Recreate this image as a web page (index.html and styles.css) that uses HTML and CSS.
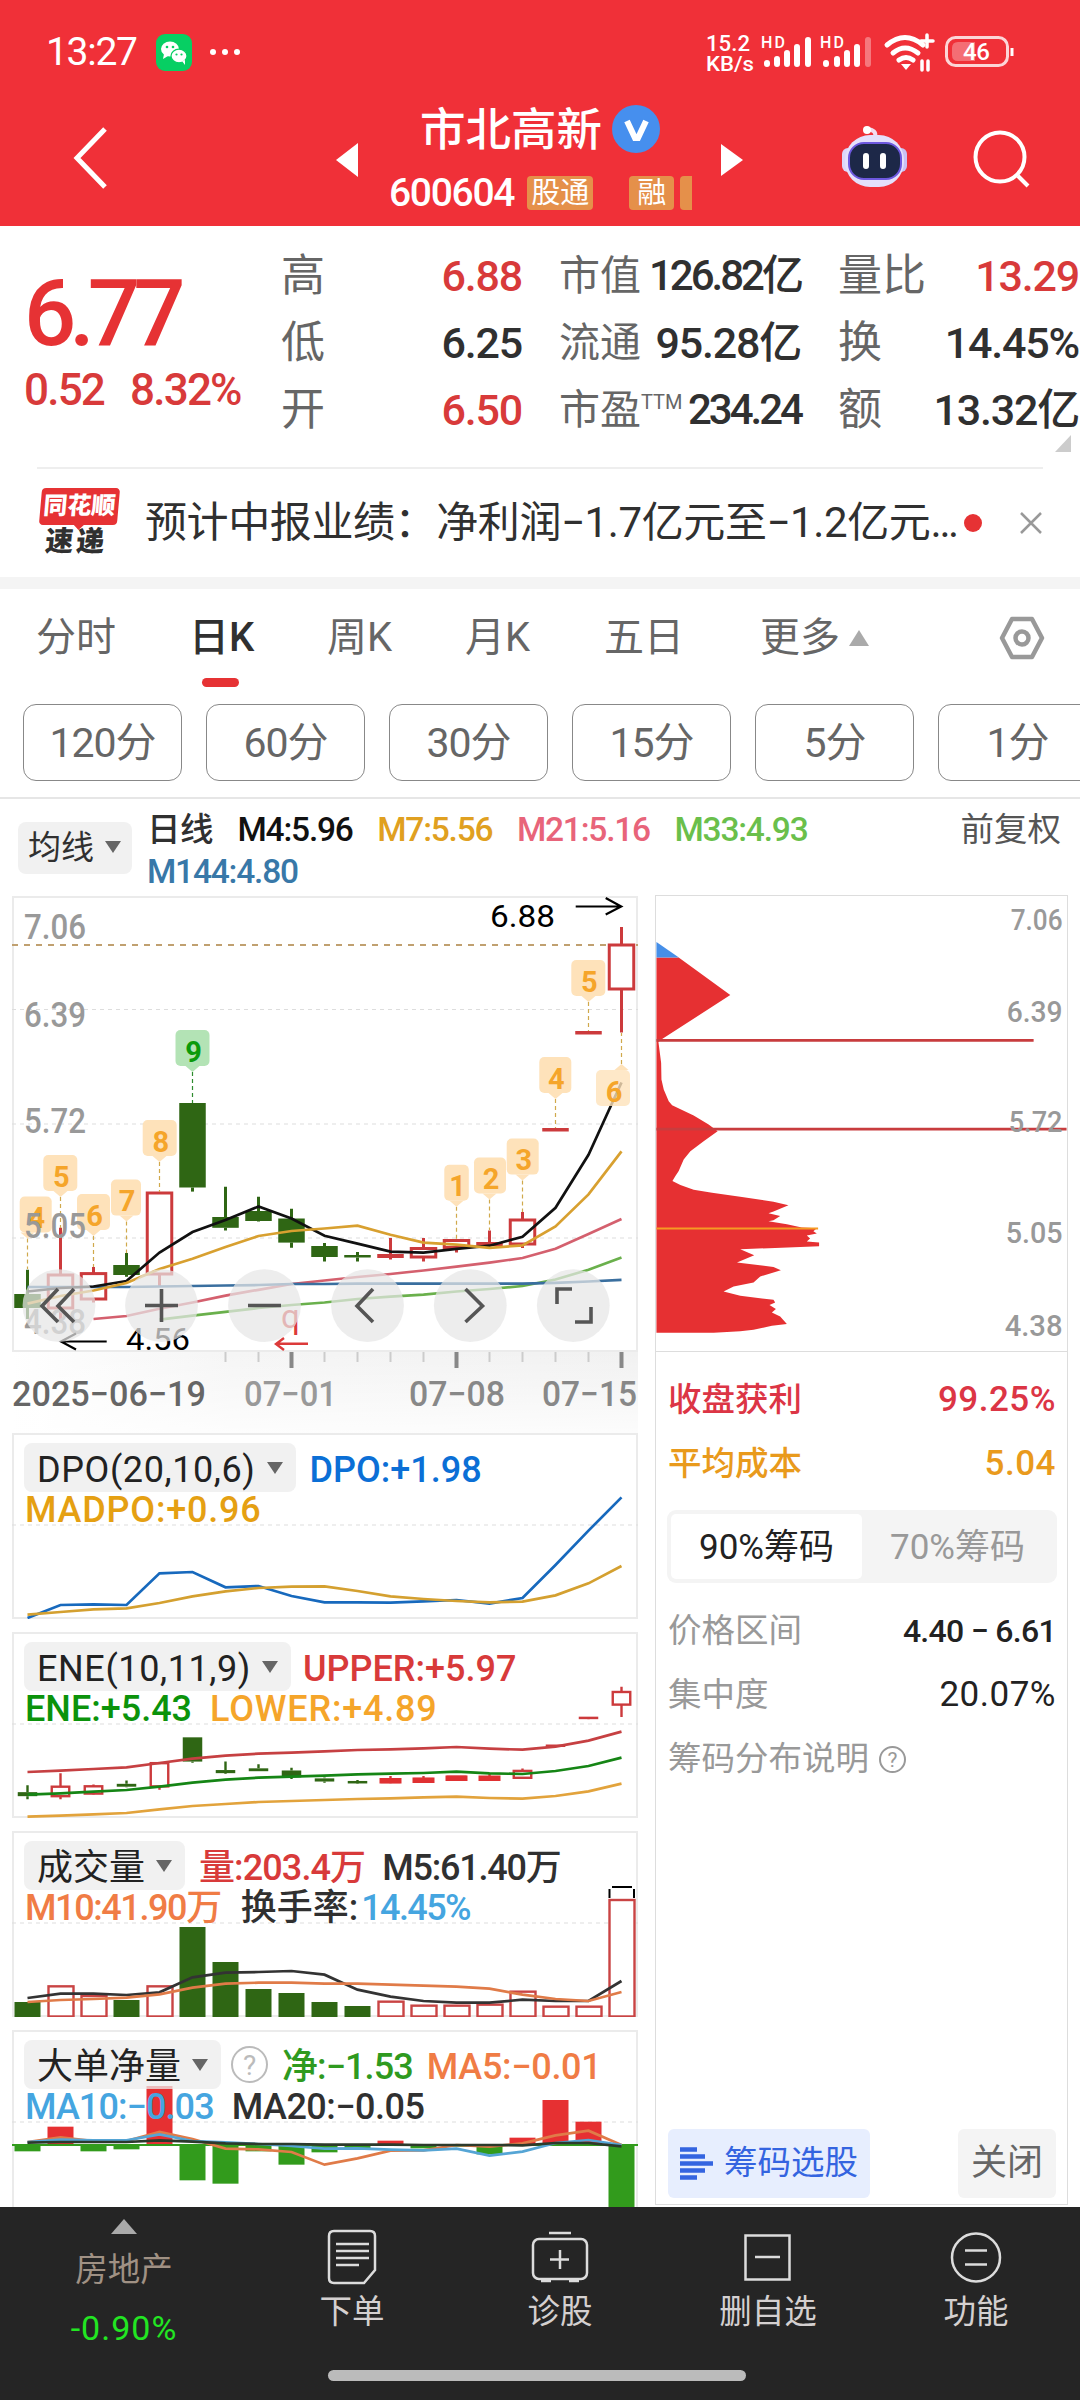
FILE: index.html
```
<!DOCTYPE html>
<html lang="zh-CN">
<head>
<meta charset="utf-8">
<meta name="viewport" content="width=device-width">
<title>市北高新 600604</title>
<link rel="stylesheet" href="styles.css">
</head>
<body>
<div class="page">

<header class="top">
	<div class="status">
		<span class="clock">13:27</span>
		<svg class="wechat" width="36" height="37" viewBox="0 0 36 37">
			<rect width="36" height="37" rx="9" fill="#07cf63"/>
			<ellipse cx="14" cy="15" rx="9" ry="7.6" fill="#fff"/>
			<path d="M8 20l-1 5 5-3z" fill="#fff"/>
			<ellipse cx="23" cy="22" rx="8" ry="6.8" fill="#fff" stroke="#07cf63" stroke-width="1.2"/>
			<path d="M26 27l3 4 0-5z" fill="#fff"/>
			<g fill="#07cf63"><circle cx="11" cy="13" r="1.3"/><circle cx="17" cy="13" r="1.3"/><circle cx="20.5" cy="20.5" r="1.1"/><circle cx="25.5" cy="20.5" r="1.1"/></g>
		</svg>
		<span class="dots"><i></i><i></i><i></i></span>
		<svg class="sysicons" width="320" height="52" viewBox="700 26 320 52">
			<g fill="#fff" font-weight="500">
				<text x="706" y="51" font-size="22" textLength="44" lengthAdjust="spacingAndGlyphs">15.2</text>
				<text x="706" y="71" font-size="21" textLength="48" lengthAdjust="spacingAndGlyphs">KB/s</text>
				<text x="761" y="48" font-size="16" textLength="24">HD</text>
				<text x="820" y="48" font-size="16" textLength="24">HD</text>
			</g>
			<g stroke="#fff" stroke-width="6" stroke-linecap="round">
				<path d="M767 63v1M777 59v5M787 53v11M797 47v17M808 40v24"/>
				<path d="M826 63v1M837 59v5M847 53v11M857 47v17"/>
				<path d="M868 40v24" opacity=".35"/>
			</g>
			<g fill="none" stroke="#fff" stroke-width="5" stroke-linecap="round">
				<path d="M887 45q18-15 36 0M893 53q12-10 25 0M899 60q7-5 14 0"/>
				<path d="M927 35v12M921 41h12M922 61v9M928 61v9" stroke-width="3.5"/>
			</g>
			<path d="M901 64h10l-5 6z" fill="#fff"/>
			<rect x="946.5" y="37.500" width="61" height="28" rx="9" fill="none" stroke="#fff" stroke-opacity=".8" stroke-width="3"/>
			<path d="M958 42h17v19h-17q-6 0-6-6v-7q0-6 6-6z" fill="#fff" opacity=".3"/>
			<path d="M1012 48v8" stroke="#fff" stroke-width="3"/>
			<text x="963" y="60" font-size="24" font-weight="500" fill="#fff" textLength="27">46</text>
		</svg>
	</div>
	<div class="titlebar">
		<svg class="back" width="40" height="64" viewBox="0 0 40 64"><path d="M35 3L7 32l28 29" fill="none" stroke="#fff" stroke-width="5"/></svg>
		<svg class="prev" width="22" height="34" viewBox="0 0 22 34"><path d="M22 0v34L0 17z" fill="#fff"/></svg>
		<div class="stock">
			<div class="name"><span>市北高新</span>
				<svg width="48" height="48" viewBox="0 0 48 48"><circle cx="24" cy="24" r="24" fill="#468fee"/><path d="M15 16l8 17h3l8-17" fill="none" stroke="#fff" stroke-width="6"/></svg>
			</div>
			<div class="code">600604<span class="tag wide">股通</span><span class="tag">融</span><span class="tag cut"></span></div>
		</div>
		<svg class="next" width="22" height="32" viewBox="0 0 22 32"><path d="M0 0v32l22-16z" fill="#fff"/></svg>
		<svg class="robot" width="68" height="62" viewBox="0 0 68 62">
			<path d="M34 11q2-7-8-8" fill="none" stroke="#f3dcef" stroke-width="4"/><circle cx="26" cy="4" r="4" fill="#fff"/>
			<rect x="1" y="22" width="12" height="24" rx="6" fill="#dcd7fa"/><rect x="54" y="22" width="12" height="24" rx="6" fill="#c9c1f4"/>
			<rect x="4" y="9" width="59" height="52" rx="25" fill="#e4e0fb"/>
			<rect x="8" y="17" width="52" height="36" rx="15" fill="#1d2848" stroke="#6d58df" stroke-width="2"/>
			<path d="M25 30v10M42 30v10" stroke="#fff" stroke-width="6" stroke-linecap="round"/>
		</svg>
		<svg class="search" width="58" height="58" viewBox="0 0 58 58"><circle cx="27" cy="27" r="24.500" fill="none" stroke="#fff" stroke-width="4"/><path d="M45 46l10 10" stroke="#fff" stroke-width="4"/></svg>
	</div>
</header>

<section class="quote">
	<div class="last">
		<div class="price">6.77</div>
		<div class="change"><span>0.52</span><span>8.32%</span></div>
	</div>
	<dl class="stats">
		<div><dt>高</dt><dd class="up">6.88</dd></div>
		<div><dt>市值</dt><dd class="tight">126.82亿</dd></div>
		<div><dt>量比</dt><dd class="up">13.29</dd></div>
		<div><dt>低</dt><dd>6.25</dd></div>
		<div><dt>流通</dt><dd>95.28亿</dd></div>
		<div><dt>换</dt><dd>14.45%</dd></div>
		<div><dt>开</dt><dd class="up">6.50</dd></div>
		<div><dt>市盈<sup>TTM</sup></dt><dd class="tight">234.24</dd></div>
		<div><dt>额</dt><dd>13.32亿</dd></div>
	</dl>
	<i class="corner"></i>
</section>

<section class="news">
	<div class="newslogo"><b>同花顺</b><em>速递</em></div>
	<p>预计中报业绩：净利润−1.7亿元至−1.2亿元…</p>
	<i class="dot"></i>
	<svg width="24" height="24" viewBox="0 0 24 24"><path d="M2 2l20 20M22 2L2 22" stroke="#999" stroke-width="2.500"/></svg>
</section>

<nav class="tabs">
	<span>分时</span><span class="on">日K</span><span>周K</span><span>月K</span><span>五日</span><span class="more">更多<i></i></span>
	<svg width="46" height="44" viewBox="0 0 46 44"><path d="M13 3h20l10 19-10 19H13L3 22z" fill="none" stroke="#999" stroke-width="4.500" stroke-linejoin="round"/><circle cx="23" cy="22" r="6.500" fill="none" stroke="#999" stroke-width="4.500"/></svg>
</nav>
<div class="mins"><span>120分</span><span>60分</span><span>30分</span><span>15分</span><span>5分</span><span>1分</span></div>

<div class="malegend">
	<span class="drop">均线<i></i></span>
	<div class="mas">
		<div><b>日线</b><span class="k">M4:5.96</span><span class="y">M7:5.56</span><span class="p">M21:5.16</span><span class="g">M33:4.93</span></div>
		<div><span class="b">M144:4.80</span></div>
	</div>
	<span class="adj">前复权</span>
</div>

<main class="charts">
	<div class="left">
		<svg id="kline" width="626" height="537" viewBox="13 896 626 537">
			<defs><linearGradient id="fade"><stop offset="0" stop-color="#fff"/><stop offset=".35" stop-color="#f5f5f5"/><stop offset="1" stop-color="#f1f1f1"/></linearGradient>
			<linearGradient id="fadeDown" x2="0" y2="1"><stop offset="0" stop-color="#fff" stop-opacity="0"/><stop offset="1" stop-color="#fff" stop-opacity=".8"/></linearGradient></defs>
		</svg>
		<section class="panel">
			<svg id="dpo" viewBox="13 0 626 186"></svg>
			<div class="legend latin"><span class="drop">DPO(20,10,6)<i></i></span><span class="dpo">DPO:+1.98</span></div>
			<div class="legend latin"><span class="amber">MADPO:+0.96</span></div>
		</section>
		<section class="panel">
			<svg id="ene" viewBox="13 0 626 186"></svg>
			<div class="legend latin"><span class="drop">ENE(10,11,9)<i></i></span><span class="red">UPPER:+5.97</span></div>
			<div class="legend latin"><span class="green">ENE:+5.43</span><span class="orange">LOWER:+4.89</span></div>
		</section>
		<section class="panel">
			<svg id="vol" viewBox="13 0 626 186"></svg>
			<div class="legend"><span class="drop">成交量<i></i></span><span class="red">量:203.4万</span><span class="dark m5">M5:61.40万</span></div>
			<div class="legend"><span class="coral m10">M10:41.90万</span><span class="dark turn">换手率:</span><span class="sky rate">14.45%</span></div>
		</section>
		<section class="panel">
			<svg id="net" viewBox="13 0 626 186"></svg>
			<div class="legend"><span class="drop">大单净量<i></i></span><span class="help">?</span><span class="leaf">净:−1.53</span><span class="coral ma5">MA5:−0.01</span></div>
			<div class="legend"><span class="sky">MA10:−0.03</span><span class="dark ma20">MA20:−0.05</span></div>
		</section>
	</div>

	<aside class="chips">
		<svg id="chips" width="411" height="456" viewBox="656 896 411 456"></svg>
		<div class="row profit"><span>收盘获利</span><b>99.25%</b></div>
		<div class="row cost"><span>平均成本</span><b>5.04</b></div>
		<div class="seg"><span class="on">90%筹码</span><span>70%筹码</span></div>
		<div class="row"><span>价格区间</span><b class="range">4.40 − 6.61</b></div>
		<div class="row"><span>集中度</span><b>20.07%</b></div>
		<div class="row"><span>筹码分布说明</span><i class="help small">?</i></div>
		<div class="actions">
			<span class="pick"><svg width="33" height="34" viewBox="0 0 33 34"><path d="M0 2.500h17M0 9.500h25M0 16.500h33M0 23.500h25M0 30.500h17" stroke="#3464e0" stroke-width="4.500"/></svg>筹码选股</span>
			<span class="close">关闭</span>
		</div>
	</aside>
</main>

<footer class="bottom">
	<div class="sector"><i></i><span>房地产</span><b>-0.90%</b></div>
	<div class="item">
		<svg width="56" height="58" viewBox="0 0 56 58"><path d="M10 3h36q5 0 5 5v34L40 55H10q-5 0-5-5V8q0-5 5-5z"/><path d="M12 16h33M12 23h33M12 30h33M12 37h23"/></svg>
		<span>下单</span>
	</div>
	<div class="item">
		<svg width="58" height="58" viewBox="0 0 58 58"><rect x="2" y="11" width="54" height="40" rx="6"/><path d="M18 5h22M29 22v19M19 31.500h19M10 53h10M38 53h10"/></svg>
		<span>诊股</span>
	</div>
	<div class="item">
		<svg width="58" height="58" viewBox="0 0 58 58"><rect x="6.500" y="7.500" width="44" height="44"/><path d="M16 29h25"/></svg>
		<span>删自选</span>
	</div>
	<div class="item">
		<svg width="58" height="58" viewBox="0 0 58 58"><circle cx="29" cy="29.500" r="24"/><path d="M18 22.500h22M18 36.500h22"/></svg>
		<span>功能</span>
	</div>
	<div class="homebar"></div>
</footer>
</div>
<script src="charts.js"></script>
</body>
</html>
```
FILE: styles.css
```
* {
	box-sizing: border-box;
}
body {
	margin: 0;
	font-family: Roboto, "Noto Sans CJK SC", sans-serif;
	line-height: 1.2;
	color: #303030;
	background: #fff;
}
i, em {
	font-style: normal;
}
svg {
	display: block;
}
.page {
	width: 1080px;
	height: 2400px;
	overflow: hidden;
	display: flex;
	flex-direction: column;
}

/* header */
.top {
	height: 226px;
	background: #f03038;
	color: #fff;
	flex: none;
}
.status {
	height: 96px;
	padding: 8px 60px 0 46px;
	display: flex;
	align-items: center;
}
.clock {
	width: 110px;
	font-size: 39px;
	letter-spacing: -1.3px;
}
.dots {
	display: flex;
	gap: 6px;
	margin-left: 18px;
}
.dots i {
	width: 6px;
	height: 6px;
	border-radius: 3px;
	background: #fff;
}
.sysicons {
	margin-left: auto;
}
.titlebar {
	height: 130px;
	display: flex;
	align-items: flex-start;
	padding-left: 70px;
}
.back {
	margin-top: 30px;
}
.prev {
	margin: 47px 0 0 226px;
}
.stock {
	width: 363px;
	padding-left: 31px;
}
.name {
	height: 66px;
	padding: 0 0 0 31px;
	display: flex;
	align-items: center;
	gap: 10px;
	font-size: 45.500px;
	font-weight: 500;
}
.name span {
	padding-top: 4px;
}
.code {
	height: 62px;
	display: flex;
	align-items: center;
	font-size: 39px;
	font-weight: 500;
	letter-spacing: -1.3px;
}
.tag {
	height: 34px;
	width: 45px;
	margin-left: 36px;
	background: #e5904a;
	border-radius: 4px;
	font-size: 29px;
	font-weight: 400;
	line-height: 35px;
	text-align: center;
	letter-spacing: 0;
}
.tag.wide {
	width: 66px;
	margin-left: 13px;
}
.tag.cut {
	width: 12px;
	margin-left: 6px;
	border-radius: 4px 0 0 4px;
}
.next {
	margin-top: 48px;
}
.robot {
	margin: 30px 0 0 98px;
}
.search {
	margin: 34px 0 0 64px;
}

/* quote */
.quote {
	height: 241px;
	flex: none;
	display: flex;
	position: relative;
}
.last {
	width: 281px;
	padding: 38px 0 0 24px;
	color: #e63234;
}
.price {
	height: 100px;
	line-height: 100px;
	font-size: 92px;
	font-weight: 500;
	letter-spacing: -7px;
}
.change {
	display: flex;
	gap: 26px;
	font-size: 44px;
	line-height: 52px;
	letter-spacing: -1.800px;
	font-weight: 500;
	color: #d83a3a;
}
.stats {
	margin: 17px 0 0;
	display: grid;
	grid-template-columns: 242px 243px 242px;
	grid-auto-rows: 67px;
	column-gap: 36px;
	white-space: nowrap;
}
.stats div {
	display: flex;
	align-items: center;
	justify-content: space-between;
}
.stats dt {
	font-size: 44px;
	color: #666;
}
.stats div:nth-child(3n+2) dt {
	font-size: 41px;
}
.stats sup {
	font-size: 20px;
	vertical-align: 15px;
	line-height: 0;
}
.stats dd {
	margin: 0;
	padding-right: 1px;
	font-size: 43px;
	font-weight: 500;
	letter-spacing: -1.200px;
}
.stats dd.tight {
	letter-spacing: -3px;
	font-size: 42px;
}
.stats dd.up {
	color: #d83a3a;
}
.corner {
	position: absolute;
	right: 9px;
	bottom: 15px;
	border: solid transparent;
	border-width: 0 0 17px 16px;
	border-bottom-color: #ccc;
}

/* news strip */
.news {
	height: 110px;
	flex: none;
	margin: 0 37px;
	border-top: 2px solid #eee;
	display: flex;
	align-items: center;
}
.newslogo {
	width: 82px;
	display: flex;
	flex-direction: column;
	align-items: center;
	transform: skewX(-5deg);
}
.newslogo b {
	width: 78px;
	height: 37px;
	line-height: 37px;
	text-align: center;
	background: #e63234;
	color: #fff;
	border-radius: 4px;
	font-size: 24px;
	font-weight: 900;
	position: relative;
}
.newslogo b::after {
	content: "";
	position: absolute;
	left: 34px;
	top: 36px;
	border: solid transparent;
	border-width: 6px 6px 0;
	border-top-color: #e63234;
}
.newslogo em {
	font-size: 28px;
	line-height: 34px;
	font-weight: 900;
	letter-spacing: 3px;
}
.news p {
	margin: 0 0 0 26px;
	width: 819px;
	font-size: 42px;
	white-space: nowrap;
	letter-spacing: -0.400px;
}
.news .dot {
	width: 18px;
	height: 18px;
	border-radius: 9px;
	background: #e63234;
}
.news svg {
	margin-left: auto;
}

/* period tabs */
.tabs {
	height: 127px;
	flex: none;
	border-top: 12px solid #f4f4f4;
	padding: 0 35px 17px 36px;
	display: flex;
	align-items: center;
	font-size: 40px;
	color: #666;
}
.tabs span {
	width: 138px;
	position: relative;
}
.tabs span:first-child {
	width: 153px;
}
.tabs span:nth-child(4) {
	width: 139px;
}
.tabs span:nth-child(5) {
	width: 156px;
}
.tabs .on {
	color: #303030;
	font-weight: 500;
}
.tabs .on::after {
	content: "";
	position: absolute;
	left: 13px;
	top: 64px;
	width: 37px;
	height: 9px;
	border-radius: 5px;
	background: #e63234;
}
.tabs .more {
	display: flex;
	align-items: center;
	gap: 9px;
}
.tabs .more i {
	border: solid transparent;
	border-width: 0 10px 16px;
	border-bottom-color: #aaa;
}
.tabs svg {
	margin-left: auto;
}
.mins {
	height: 95px;
	flex: none;
	border-bottom: 2px solid #e6e6e6;
	padding-left: 23px;
	display: flex;
	gap: 24px;
}
.mins span {
	flex: none;
	width: 159px;
	height: 77px;
	line-height: 77px;
	border: 1px solid #888;
	border-radius: 13px;
	text-align: center;
	font-size: 41px;
	letter-spacing: -1px;
	color: #666;
}

/* moving average legend */
.malegend {
	height: 97px;
	flex: none;
	display: flex;
	align-items: flex-start;
	padding: 10px 19px 0 18px;
	font-size: 33.500px;
	line-height: 42px;
}
.drop {
	display: flex;
	align-items: center;
	background: #f1f1f1;
	border-radius: 8px;
}
.drop i {
	margin-left: 11px;
	border: solid transparent;
	border-width: 12px 8px 0;
	border-top-color: #666;
}
.malegend .drop {
	width: 114px;
	height: 52px;
	margin-top: 13px;
	padding-left: 10px;
	font-size: 33px;
}
.mas {
	margin-left: 15px;
	font-weight: 500;
	letter-spacing: -1.200px;
}
.mas div {
	display: flex;
	gap: 24.500px;
	height: 42px;
}
.mas b {
	font-weight: 500;
	letter-spacing: -0.500px;
}
.mas .k { color: #111; }
.mas .y { color: #e0a020; }
.mas .p { color: #e8647a; }
.mas .g { color: #6abf4b; }
.mas .b { color: #3878a8; }
.adj {
	margin-left: auto;
	color: #555;
}

/* charts */
.charts {
	display: flex;
	height: 1312px;
	flex: none;
	margin-top: -1px;
	padding-left: 12px;
}
.charts text {
	font-family: Roboto, sans-serif;
}
.left {
	width: 626px;
	height: 1312px;
	padding-top: 1px;
	display: flex;
	flex-direction: column;
	overflow: hidden;
}
#kline {
	flex: none;
}
.panel {
	flex: none;
	height: 186px;
	margin-bottom: 13px;
	padding: 9px 0 0 12px;
	box-shadow: inset 0 0 0 2px #ebebeb;
	position: relative;
}
.panel svg {
	position: absolute;
	left: 0;
	top: 0;
	width: 626px;
	height: 186px;
}
.legend {
	position: relative;
	display: flex;
	align-items: center;
	height: 51px;
	gap: 14px;
	font-size: 36px;
	font-weight: 500;
	letter-spacing: -0.900px;
	white-space: nowrap;
	line-height: 44px;
}
.legend > span:not(.help):not(.drop) {
	padding-top: 4px;
}
.legend + .legend {
	height: 40px;
	margin-top: -5px;
	padding-left: 1px;
}
.legend .drop {
	height: 49px;
	padding: 4px 13px 0;
	font-weight: 400;
	letter-spacing: 0;
	background: rgba(236, 236, 236, .75);
	color: #222;
}
.drop i {
	margin-top: -3px;
}
.latin {
	letter-spacing: 0;
}
.legend.latin .drop {
	letter-spacing: 0.600px;
}
.latin .amber, .latin .orange {
	letter-spacing: 0.800px;
}
.latin .orange {
	margin-left: 4px;
}
.latin .red {
	margin-left: -2px;
}
.legend .m5 {
	margin-left: 3px;
	letter-spacing: -1.200px;
}
.legend .m10 {
	letter-spacing: -1.400px;
}
.legend .turn {
	margin-left: 6px;
	letter-spacing: 0;
}
.legend .rate {
	margin-left: -11px;
	letter-spacing: -1.600px;
}
.legend .ma5 {
	letter-spacing: -0.300px;
}
.legend .ma20 {
	margin-left: 4px;
	letter-spacing: -0.500px;
}
.dpo { color: #0b6fd6; }
.amber { color: #e5a012; }
.red { color: #d83a3a; }
.green { color: #0b930b; }
.orange { color: #f5a52a; }
.dark { color: #303030; }
.coral { color: #f07c45; }
.sky { color: #45a5e0; }
.leaf { color: #2f9a1f; }
.help {
	width: 37px;
	height: 37px;
	border: 2.500px solid #bbb;
	border-radius: 50%;
	color: #bbb;
	font-size: 28px;
	line-height: 35px;
	text-align: center;
	font-weight: 400;
	letter-spacing: 0;
}
.legend .help {
	margin-left: -4px;
}
.help.small {
	width: 27px;
	height: 27px;
	font-size: 21px;
	line-height: 24px;
	border-color: #999;
	color: #999;
}

/* chip distribution */
.chips {
	width: 413px;
	height: 1310px;
	margin-left: 17px;
	border: 1px solid #ddd;
	display: flex;
	flex-direction: column;
}
#chips {
	border-bottom: 1px solid #ddd;
	flex: none;
}
.chips .row {
	height: 64px;
	flex: none;
	padding: 0 11px 0 12px;
	display: flex;
	align-items: center;
	justify-content: space-between;
	font-size: 33.500px;
	color: #999;
}
.chips .row b {
	font-size: 35px;
	font-weight: 400;
	color: #222;
	letter-spacing: 0.500px;
}
.chips .row .range {
	font-size: 32px;
	font-weight: 500;
	letter-spacing: -0.700px;
}
.chips .profit {
	margin-top: 16px;
}
.chips .profit, .chips .profit b {
	color: #dc3545;
	font-weight: 500;
}
.chips .cost, .chips .cost b {
	color: #e99a1c;
	font-weight: 500;
}
.seg {
	flex: none;
	height: 73px;
	margin: 14px 10px 16px 11px;
	padding: 4px;
	background: #f4f4f4;
	border-radius: 9px;
	display: flex;
	font-size: 35px;
	line-height: 67px;
	text-align: center;
	color: #999;
}
.seg span {
	flex: 1;
}
.seg .on {
	background: #fff;
	color: #222;
	border-radius: 5px;
}
.chips .row:nth-last-child(2) {
	justify-content: flex-start;
	gap: 10px;
}
.actions {
	margin: auto 11px 6px 12px;
	display: flex;
	justify-content: space-between;
}
.actions span {
	height: 69px;
	display: flex;
	align-items: center;
	border-radius: 6px;
}
.pick {
	width: 202px;
	padding-left: 12px;
	gap: 11px;
	font-size: 33.500px;
	color: #3464e0;
	background: #e7eefe;
}
.close {
	width: 98px;
	justify-content: center;
	font-size: 36px;
	color: #666;
	background: #f4f4f4;
}

/* bottom bar */
.bottom {
	height: 193px;
	flex: none;
	background: #252525;
	position: relative;
	display: flex;
	padding-left: 20px;
	color: #d4d0d0;
	font-size: 32.500px;
	text-align: center;
}
.sector {
	width: 208px;
	height: 155px;
	padding-top: 12px;
	display: flex;
	flex-direction: column;
	align-items: center;
	color: #a09184;
	line-height: 58px;
}
.sector i {
	border: solid transparent;
	border-width: 0 13px 15px;
	border-bottom-color: #aaa;
}
.sector span {
	margin-top: 7px;
}
.sector b {
	font-size: 34px;
	font-weight: 400;
	letter-spacing: 1px;
	color: #22e622;
}
.item {
	width: 208px;
	padding-top: 21px;
	display: flex;
	flex-direction: column;
	align-items: center;
}
.sector + .item {
	margin-left: 20px;
}
.item svg {
	fill: none;
	stroke: #dcdcdc;
	stroke-width: 2.500;
}
.item span {
	line-height: 52px;
}
.homebar {
	position: absolute;
	left: 328px;
	top: 163px;
	width: 418px;
	height: 11px;
	border-radius: 6px;
	background: #bbb;
}
```
FILE: charts.js
```
var NS = 'http://www.w3.org/2000/svg';
var RED = '#cc3a3c', GREEN = '#2f6614';

function el(parent, tag, attrs, text) {
	var e = document.createElementNS(NS, tag);
	for (var k in attrs) e.setAttribute(k, attrs[k]);
	if (text !== undefined) e.textContent = text;
	parent.appendChild(e);
	return e;
}
function cx(i) { return 28.5 + i * 33; }
function series(svg, ys, color, from, w) {
	var pts = ys.map(function (y, i) { return cx(i + (from || 0)) + ',' + y; }).join(' ');
	el(svg, 'polyline', {points: pts, fill: 'none', stroke: color, 'stroke-width': w || 2.7});
}
function dash(svg, y, color, pattern, w) {
	el(svg, 'path', {d: 'M13 ' + y + 'H639', stroke: color || '#ddd', 'stroke-width': w || 1, 'stroke-dasharray': pattern || '4 4'});
}
// vertical values of the small panels are stored in thirds of a pixel
function third(top) { return function (v) { return (v - top) / 3; }; }

// [high, bodyTop, bodyBottom, low, kind]  kind: g green, r hollow red, f filled red
var candles = [
	[1269.8, 1294, 1308, 1319, 'g'], [1227.8, 1275, 1308, 1319, 'r'], [1267, 1273.6, 1299, 1302.5, 'r'],
	[1253, 1265, 1275, 1276.7, 'g'], [1192.7, 1193, 1274, 1286, 'r'], [1103, 1103, 1187.5, 1191.6, 'g'],
	[1186.8, 1217, 1227.8, 1230.5, 'g'], [1196.8, 1211, 1221, 1221.6, 'g'], [1208.8, 1218.5, 1242.6, 1247.8, 'g'],
	[1243, 1246, 1257, 1261.5, 'g'], [1252, 1255, 1256.8, 1261.5, 'g'], [1238, 1254, 1258, 1259.5, 'f'],
	[1238, 1248.5, 1257, 1261.5, 'r'], [1239, 1240.5, 1247.5, 1252.5, 'r'], [1230.5, 1242, 1246, 1246, 'f'],
	[1212, 1220, 1244, 1248, 'r'], [1128, 1128, 1131.5, 1131.5, 'f'], [1031, 1031, 1034.5, 1034.5, 'f'],
	[927, 945, 989, 1032.5, 'r']
];
function drawCandles(svg, map, w, sw) {
	candles.forEach(function (c, i) {
		var x = cx(i), col = c[4] === 'g' ? GREEN : RED;
		var t = map(c[1]), h = Math.max(map(c[2]) - t, 2.5);
		el(svg, 'path', {d: 'M' + x + ' ' + map(c[0]) + 'V' + t + 'M' + x + ' ' + (t + h) + 'V' + map(c[3]), stroke: col, 'stroke-width': sw});
		if (c[4] === 'r') el(svg, 'rect', {x: x - w / 2 + 1, y: t, width: w - 2, height: h, fill: '#fff', stroke: col, 'stroke-width': sw});
		else el(svg, 'rect', {x: x - w / 2, y: t, width: w, height: h, fill: col});
	});
}
function label(svg, s, x, y, w, size, color, weight) {
	el(svg, 'text', {x: x, y: y, 'font-size': size, fill: color, textLength: w, lengthAdjust: 'spacingAndGlyphs', 'font-weight': weight || 400}, s);
}

function kline() {
	var s = document.getElementById('kline');
	el(s, 'rect', {x: 13, y: 1352, width: 626, height: 81, fill: 'url(#fade)'});
	el(s, 'rect', {x: 13, y: 1352, width: 626, height: 81, fill: 'url(#fadeDown)'});
	el(s, 'rect', {x: 14, y: 897, width: 624, height: 454, fill: '#fff', stroke: '#ebebeb', 'stroke-width': 2});
	[1009.5, 1124, 1238].forEach(function (y) { dash(s, y); });
	dash(s, 945, '#c0a070', '6 6', 2);
	drawCandles(s, function (y) { return y; }, 26.5, 3);

	series(s, [1319, 1316, 1308.7, 1302.5, 1295.6, 1289.8, 1284, 1280.5, 1277, 1274, 1270.5, 1266.7, 1262.6, 1258, 1248.8, 1234, 1219], '#d4606e', 2);
	series(s, [1319.7, 1315.6, 1311.8, 1308, 1305, 1302.5, 1299, 1296.7, 1294.6, 1291.5, 1289, 1286, 1279.5, 1269.8, 1257.4], '#6ab04c', 4);
	series(s, [1287, 1287, 1287, 1287, 1286.5, 1286, 1285.5, 1285, 1284, 1284, 1283.6, 1283.6, 1283.6, 1283.6, 1283.6, 1283.6, 1282.8, 1281.5, 1279.8], '#3a6f9f');
	series(s, [1291.5, 1288, 1286.5, 1281, 1252.6, 1232, 1220, 1206.5, 1218.5, 1235.7, 1243.6, 1251.6, 1252.6, 1248.8, 1245.7, 1236.7, 1207.8, 1154.8, 1082.5], '#111');
	series(s, [1303.6, 1296, 1290.5, 1283, 1269, 1258.8, 1247, 1236, 1231, 1228.5, 1225.7, 1234.7, 1242.6, 1244.7, 1247.8, 1245.4, 1226.4, 1194.4, 1151.4], '#d8a030');

	// nine-turn flags: index, digit, left, top, width, line end
	[[0, 4, 20.7, 1196.5, 32, 1269], [1, 5, 44.3, 1155, 34, 1228], [2, 6, 78, 1194, 33, 1267], [3, 7, 112, 1179.6, 30, 1253],
	 [4, 8, 143.7, 1120, 34, 1192], [5, 9, 176.5, 1030, 34, 1103], [13, 1, 445.3, 1164.8, 24.5, 1239], [14, 2, 475, 1157.5, 32, 1230],
	 [15, 3, 507.7, 1138.6, 32, 1212], [16, 4, 540.3, 1057, 32, 1128], [17, 5, 572.3, 960, 34, 1031], [18, 6, 597, 1070, 34, 1033]
	].forEach(function (f) {
		var x = cx(f[0]), nine = f[1] === 9, below = f[0] === 18;
		var bg = nine ? '#b3e3b5' : '#fee2ba', tip = below ? f[3] - 6 : f[3] + 42, edge = below ? f[3] : f[3] + 36;
		el(s, 'path', {d: 'M' + x + ' ' + tip + 'V' + f[5], stroke: nine ? '#2e8b2e' : '#d0a94c', 'stroke-dasharray': '4 3', 'stroke-width': 1.2});
		el(s, 'rect', {x: f[2], y: f[3], width: f[4], height: 36, rx: 5, fill: bg, opacity: below ? 0.8 : 1});
		el(s, 'path', {d: 'M' + (x - 7) + ' ' + edge + 'L' + x + ' ' + tip + 'L' + (x + 7) + ' ' + edge + 'z', fill: bg});
		el(s, 'text', {x: f[2] + f[4] / 2 + 1, y: f[3] + 31.5, 'text-anchor': 'middle', 'font-size': 29, 'font-weight': 700, fill: nine ? '#0a9a0a' : '#f5a52a'}, f[1]);
	});

	[['7.06', 938.5], ['6.39', 1027], ['5.72', 1133], ['5.05', 1238], ['4.38', 1334]].forEach(function (a) {
		label(s, a[0], 25, a[1], 62, 35, '#999', 500);
	});
	label(s, '6.88', 491, 926.5, 65, 31, '#000');
	label(s, '4.56', 127, 1349.7, 64, 31, '#000');
	el(s, 'path', {d: 'M576.7 906.5H622M606.7 898l15.5 8.500-15.500 8M107.700 1341.500H62M77 1333.500l-15 8 15 8', fill: 'none', stroke: '#000', 'stroke-width': 2.2});
	el(s, 'text', {x: 282, y: 1328, 'font-size': 33, fill: '#dc3a3a'}, 'q');
	el(s, 'path', {d: 'M309 1343.800H278M285 1338l-8 6 8 6', fill: 'none', stroke: '#dc3a3a', 'stroke-width': 2.4});

	[60, 162.500, 265.500, 368.500, 471.300, 574.300].forEach(function (x) {
		el(s, 'circle', {cx: x, cy: 1305.6, r: 36.4, fill: '#e6e6e6', 'fill-opacity': 0.72});
	});
	el(s, 'path', {d: 'M59 1289l-16 17 16 16M75 1289l-16 17 16 16M146 1305.500h33M162.500 1289v33M249 1305.500h33M374 1289l-16 17 16 16M466.500 1289l17 17-17 16M573 1289h-15v15M592 1307v15h-16', fill: 'none', stroke: '#555', 'stroke-width': 3.6});

	for (var i = 6; i < 19; i++) {
		var big = i === 8 || i === 13 || i === 18;
		el(s, 'path', {d: 'M' + cx(i) + ' 1352v' + (big ? 16 : 10), stroke: big ? '#888' : '#ccc', 'stroke-width': big ? 4 : 2});
	}
	label(s, '2025−06−19', 13, 1406, 194, 35, '#666', 500);
	label(s, '07−01', 245, 1406, 93, 35, '#999', 500);
	label(s, '07−08', 410, 1406, 96, 35, '#888', 500);
	label(s, '07−15', 543, 1406, 95, 35, '#888', 500);
}

function dpo() {
	var s = document.getElementById('dpo'), m = third(39);
	dash(s, 92);
	series(s, [594, 555, 553, 555, 460, 456, 502, 498, 528, 547, 547, 548, 544, 540, 551, 534, 435, 332, 232].map(m), '#1769bd');
	series(s, [584, 576, 568, 565, 549, 529, 514, 504, 500, 499, 513, 529, 537, 543, 547, 545, 526, 490, 438].map(m), '#d4a030');
}
function ene() {
	var s = document.getElementById('ene'), m = third(636);
	dash(s, 92);
	drawCandles(s, function (y) { return 59.700 + (y - 944) * 0.287; }, 19.500, 2.4);
	series(s, [1056, 1052, 1047, 1042, 1029, 1016, 1007, 1001, 998, 994, 990, 988, 985, 981, 986, 989, 980, 962, 935].map(m), '#c64042');
	series(s, [1124, 1120, 1115, 1110, 1100, 1088, 1079, 1073, 1070, 1067, 1063, 1061, 1059, 1055, 1060, 1062, 1053, 1038, 1013].map(m), '#158515');
	series(s, [1190, 1187, 1183, 1179, 1168, 1158, 1152, 1146, 1143, 1140, 1137, 1135, 1132, 1130, 1134, 1136, 1128, 1114, 1091].map(m), '#e2a33c');
	[11, 12, 13, 14].forEach(function (i) {
		el(s, 'rect', {x: cx(i) - 11, y: [146, 145.500, 143.500, 143.500][i - 11], width: 22, height: 5.5, fill: '#e03032'});
	});
}
function vol() {
	var s = document.getElementById('vol'), m = third(33);
	dash(s, 92);
	[546, 496, 525, 540, 496, 321, 426, 507, 519, 546, 558, 542, 554, 554, 551, 512, 557, 557, 237].forEach(function (v, i) {
		var up = [1, 2, 4].indexOf(i) >= 0 || i > 10, y = m(v);
		if (up) el(s, 'rect', {x: cx(i) - 12, y: y + 1, width: 25, height: 184.500 - y, fill: '#fff', stroke: '#c94444', 'stroke-width': 2.4});
		else el(s, 'rect', {x: cx(i) - 13, y: y, width: 26, height: 186 - y, fill: GREEN});
	});
	el(s, 'path', {d: 'M610.500 67v-9M635 67v-9M613 56h20', stroke: '#000', 'stroke-width': 2});
	series(s, [534, 521, 521, 525, 517, 472, 458, 456, 453, 464, 509, 530, 543, 548, 548, 539, 543, 543, 483].map(m), '#333');
	series(s, [546, 540, 537, 533, 523, 503, 491, 488, 488, 491, 491, 494, 497, 500, 506, 524, 537, 543, 516].map(m), '#e07b48');
}
function net() {
	var s = document.getElementById('net'), m = third(630);
	dash(s, 92);
	[994, 920, 994, 988, 798, 1081, 1091, 994, 1034, 997, 990, 962, 985, 980, 1003, 953, 840, 905, 1180].forEach(function (v, i) {
		var up = v < 973;
		el(s, 'rect', {x: cx(i) - 13, y: m(Math.min(v, 973)), width: 26, height: Math.abs(v - 973) / 3, fill: up ? '#e63032' : '#329b1c'});
	});
	el(s, 'path', {d: 'M13 115H639', stroke: '#329b1c', 'stroke-width': 2});
	series(s, [966, 952, 963, 963, 936, 957, 986, 988, 996, 1034, 1015, 992, 991, 975, 980, 970, 946, 932, 975].map(m), '#e07b48');
	series(s, [966, 959, 961, 961, 943, 963, 967, 972, 978, 986, 985, 989, 991, 986, 1007, 995, 969, 960, 975].map(m), '#55a5d5');
	series(s, [968, 966, 966, 966, 961, 965, 970, 972, 972, 974, 974, 974, 975, 975, 975, 976, 969, 969, 979].map(m), '#2c3a2c');
}
function chips() {
	var s = document.getElementById('chips');
	var p = [48, 233, 115, 233, 270, 346, 65, 478, 54, 487, 62, 550, 63, 600, 70, 630, 85, 665, 95, 677, 160, 708, 205, 735, 232, 755,
		190, 785, 150, 815, 130, 840, 115, 875, 105, 890, 96, 905, 120, 917, 160, 931, 215, 940, 305, 953, 400, 967, 445, 978, 400, 997,
		385, 1002, 420, 1010, 400, 1023, 385, 1026, 440, 1035, 485, 1045, 530, 1047, 520, 1056, 530, 1063, 500, 1069, 510, 1078, 500, 1087,
		537, 1090, 537, 1101, 405, 1106, 300, 1110, 342, 1128, 290, 1150, 400, 1163, 422, 1173, 360, 1192, 340, 1210, 280, 1222, 250, 1237,
		300, 1250, 400, 1262, 405, 1270, 388, 1278, 407, 1290, 395, 1300, 420, 1312, 440, 1335, 395, 1340, 340, 1352, 300, 1357, 220, 1361, 48, 1361];
	var d = '';
	for (var i = 0; i < p.length; i += 2) d += (640 + p[i] / 3).toFixed(1) + ',' + (880 + p[i + 1] / 3).toFixed(1) + ' ';
	el(s, 'polygon', {points: d, fill: '#e63032'});
	el(s, 'polygon', {points: '656,942 678.500,957.700 656,957.700', fill: '#468fe8'});
	el(s, 'path', {d: 'M656 1040.700H1034M656 1129.700H1067', stroke: '#c83c3e', 'stroke-width': 2.8});
	el(s, 'path', {d: 'M656 1229.200H818', stroke: '#f59a23', 'stroke-width': 2});
	label(s, '7.06', 1011, 930, 52, 30, '#999', 500);
	label(s, '6.39', 1007, 1022, 56, 30, '#999', 500);
	label(s, '5.72', 1009, 1133, 54, 30, '#999', 500);
	label(s, '5.05', 1006, 1244, 57, 30, '#999', 500);
	label(s, '4.38', 1005, 1337, 58, 30, '#999', 500);
}
kline();
dpo();
ene();
vol();
net();
chips();
```
